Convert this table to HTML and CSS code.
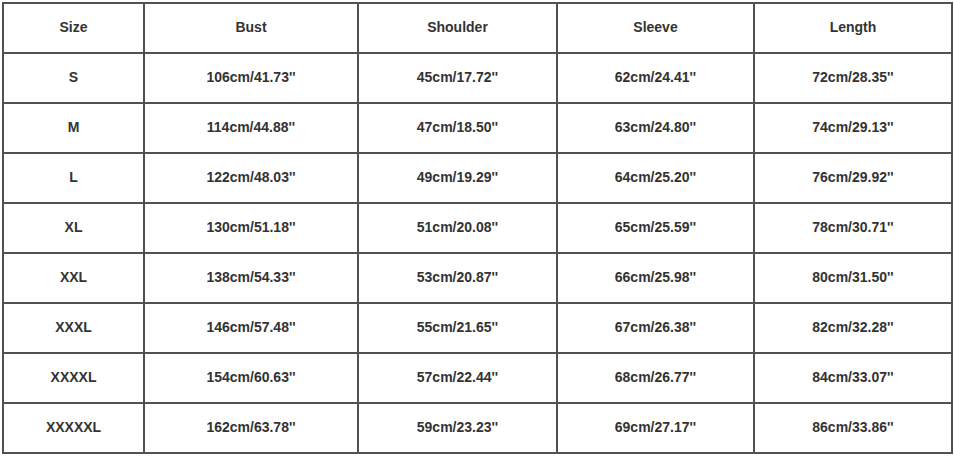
FILE: index.html
```html
<!DOCTYPE html>
<html>
<head>
<meta charset="utf-8">
<link rel="stylesheet" href="styles.css">
</head>
<body>
<div class="chart">
  <div class="cell">Size</div><div class="cell">Bust</div><div class="cell">Shoulder</div><div class="cell">Sleeve</div><div class="cell">Length</div>
  <div class="cell">S</div><div class="cell">106cm/41.73''</div><div class="cell">45cm/17.72''</div><div class="cell">62cm/24.41''</div><div class="cell">72cm/28.35''</div>
  <div class="cell">M</div><div class="cell">114cm/44.88''</div><div class="cell">47cm/18.50''</div><div class="cell">63cm/24.80''</div><div class="cell">74cm/29.13''</div>
  <div class="cell">L</div><div class="cell">122cm/48.03''</div><div class="cell">49cm/19.29''</div><div class="cell">64cm/25.20''</div><div class="cell">76cm/29.92''</div>
  <div class="cell">XL</div><div class="cell">130cm/51.18''</div><div class="cell">51cm/20.08''</div><div class="cell">65cm/25.59''</div><div class="cell">78cm/30.71''</div>
  <div class="cell">XXL</div><div class="cell">138cm/54.33''</div><div class="cell">53cm/20.87''</div><div class="cell">66cm/25.98''</div><div class="cell">80cm/31.50''</div>
  <div class="cell">XXXL</div><div class="cell">146cm/57.48''</div><div class="cell">55cm/21.65''</div><div class="cell">67cm/26.38''</div><div class="cell">82cm/32.28''</div>
  <div class="cell">XXXXL</div><div class="cell">154cm/60.63''</div><div class="cell">57cm/22.44''</div><div class="cell">68cm/26.77''</div><div class="cell">84cm/33.07''</div>
  <div class="cell">XXXXXL</div><div class="cell">162cm/63.78''</div><div class="cell">59cm/23.23''</div><div class="cell">69cm/27.17''</div><div class="cell">86cm/33.86''</div>
</div>
</body>
</html>
```
FILE: styles.css
```css
html, body {
  margin: 0;
  padding: 0;
  background: #ffffff;
}
body {
  padding: 2px 0 0 2px;
}
.chart {
  display: grid;
  grid-template-columns: 139px 212px 197px 195px 196px;
  grid-auto-rows: 48px;
  gap: 2px;
  padding: 2px;
  background: #505050;
  width: max-content;
}
.cell {
  background: #ffffff;
  display: flex;
  align-items: center;
  justify-content: center;
  padding-bottom: 2px;
  box-sizing: border-box;
  font-family: "Liberation Sans", Arial, sans-serif;
  font-weight: bold;
  font-size: 14px;
  color: #333333;
}
```
